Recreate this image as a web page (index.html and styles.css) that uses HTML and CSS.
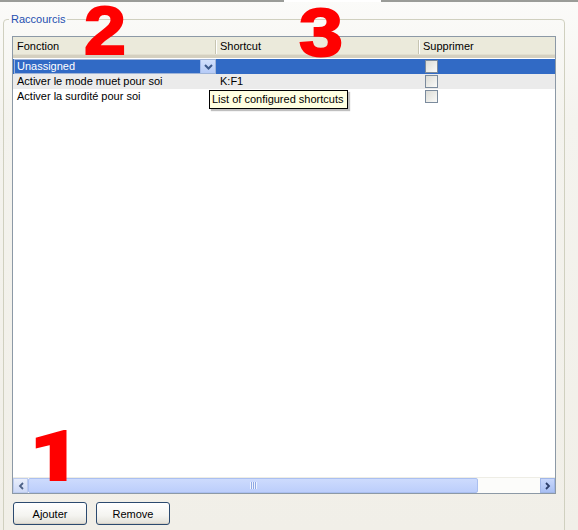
FILE: index.html
```html
<!DOCTYPE html>
<html lang="fr">
<head>
<meta charset="utf-8">
<title>Raccourcis</title>
<link rel="stylesheet" href="styles.css">
</head>
<body>
<div class="tabline"><div class="tl-left"></div><div class="tl-gap"></div><div class="tl-right"></div></div>
<div class="page">
  <fieldset class="group">
    <legend class="group-title">Raccourcis</legend>
    <div class="group-body">
      <div class="list">
        <div class="list-header">
          <div class="hcell">Fonction</div>
          <div class="hcell">Shortcut</div>
          <div class="hcell last">Supprimer</div>
        </div>
        <div class="row selected">
          <div class="cell combo-cell">
            <div class="combo">
              <span class="combo-text">Unassigned</span>
              <span class="combo-btn">
                <svg width="9" height="6" viewBox="0 0 9 6"><path d="M1 1 L4.5 4.5 L8 1" fill="none" stroke="#3d5a8c" stroke-width="2"/></svg>
              </span>
            </div>
          </div>
          <div class="cell"></div>
          <div class="cell check-cell"><span class="check"></span></div>
        </div>
        <div class="row alt">
          <div class="cell">Activer le mode muet pour soi</div>
          <div class="cell">K:F1</div>
          <div class="cell check-cell"><span class="check"></span></div>
        </div>
        <div class="row">
          <div class="cell">Activer la surdité pour soi</div>
          <div class="cell"></div>
          <div class="cell check-cell"><span class="check"></span></div>
        </div>
        <div class="list-fill"></div>
        <div class="hscroll">
          <div class="sb-btn sb-left">
            <svg width="6" height="8" viewBox="0 0 6 8"><path d="M5 1 L2 4 L5 7" fill="none" stroke="#4d6185" stroke-width="1.8"/></svg>
          </div>
          <div class="sb-thumb"><span class="grip"></span></div>
          <div class="sb-track"></div>
          <div class="sb-btn sb-right">
            <svg width="6" height="8" viewBox="0 0 6 8"><path d="M1 1 L4 4 L1 7" fill="none" stroke="#2d3f6b" stroke-width="1.8"/></svg>
          </div>
        </div>
      </div>
      <div class="buttons">
        <button class="btn">Ajouter</button>
        <button class="btn">Remove</button>
      </div>
    </div>
  </fieldset>
</div>
<div class="tooltip">List of configured shortcuts</div>
<svg class="mark mark-2" width="52" height="60" viewBox="0 0 52 60"><text class="mark-text" x="4" y="53.5" textLength="42" lengthAdjust="spacingAndGlyphs">2</text></svg>
<svg class="mark mark-3" width="52" height="60" viewBox="0 0 52 60"><text class="mark-text" x="4" y="56" textLength="44" lengthAdjust="spacingAndGlyphs">3</text></svg>
<svg class="mark mark-1" width="50" height="62" viewBox="0 0 50 62"><text class="mark-text one" x="0" y="55" textLength="50" lengthAdjust="spacingAndGlyphs">1</text></svg>
</body>
</html>
```
FILE: styles.css
```css
html, body {
  margin: 0;
  padding: 0;
}
body {
  width: 578px;
  height: 530px;
  overflow: hidden;
  position: relative;
  font-family: "Liberation Sans", Arial, sans-serif;
  font-size: 11px;
  color: #000;
  background: linear-gradient(#fbfbf9 0px, #f4f3ee 120px, #f1efe8 530px);
}
.tabline {
  display: flex;
  height: 2px;
}
.tl-left {
  flex: 0 0 284px;
  background: #9a9c98;
}
.tl-gap {
  flex: 0 0 97px;
  background: #ffffff;
}
.tl-right {
  flex: 1;
  background: #9a9c98;
}
.page {
  padding: 11px 13px 0 3px;
}
.group {
  margin: 0;
  padding: 0;
  border: 1px solid #d0d0bf;
  border-radius: 4px;
  min-width: 0;
}
.group-title {
  margin-left: 5px;
  padding: 0 2px;
  color: #1f4fb0;
  line-height: 13px;
  font-size: 11px;
}
.group-body {
  padding: 10px 8px 40px 8px;
}
.list {
  height: 458px;
  box-sizing: border-box;
  border: 1px solid #8c99a6;
  background: #fff;
  display: flex;
  flex-direction: column;
}
.list-header {
  display: grid;
  grid-template-columns: 203px 203px 1fr;
  height: 21px;
  box-sizing: border-box;
  background: #ebeadb;
  border-bottom: 3px solid #d4d0c0;
  box-shadow: inset 0 -1px 0 #e2dfd0;
}
.hcell {
  position: relative;
  padding-left: 4px;
  line-height: 19px;
}
.hcell::after {
  content: "";
  position: absolute;
  right: 0;
  top: 3px;
  bottom: 2px;
  width: 1px;
  background: #c7c5b2;
  box-shadow: 1px 0 0 #fff;
}
.hcell.last::after {
  display: none;
}
.row {
  display: grid;
  grid-template-columns: 203px 203px 1fr;
  height: 15px;
}
.list-header + .row {
  margin-top: 1px;
}
.row.alt {
  background: #ebebeb;
}
.row.selected {
  background: #316ac5;
}
.cell {
  padding-left: 4px;
  line-height: 15px;
  white-space: nowrap;
}
.combo-cell {
  padding-left: 1px;
}
.combo {
  display: flex;
  height: 15px;
  box-sizing: border-box;
  border: 1px solid #9fb4d8;
  background: #316ac5;
}
.combo-text {
  flex: 1;
  color: #fff;
  padding-left: 2px;
  line-height: 13px;
}
.combo-btn {
  flex: 0 0 14px;
  background: linear-gradient(#d2e0fc, #b6cbf7);
  border-left: 1px solid #a5bbe8;
  display: flex;
  align-items: center;
  justify-content: center;
}
.check-cell {
  padding-left: 6px;
  display: flex;
  align-items: center;
}
.check {
  width: 13px;
  height: 13px;
  box-sizing: border-box;
  border: 1px solid #7b8b9d;
  background: linear-gradient(135deg, #dcdcd6, #fafaf8);
}
.list-fill {
  flex: 1;
}
.hscroll {
  display: flex;
  height: 15px;
  background: #f9f9f6;
  border-top: 1px solid #eeede5;
}
.sb-btn {
  flex: 0 0 15px;
  display: flex;
  align-items: center;
  justify-content: center;
  box-sizing: border-box;
}
.sb-left {
  background: linear-gradient(#e9eefb, #cdd9f6);
  border: 1px solid #bccbee;
}
.sb-right {
  background: linear-gradient(#c8d7fb, #a9c0f4);
  border: 1px solid #a0b6e8;
}
.sb-thumb {
  flex: 0 0 450px;
  box-sizing: border-box;
  border: 1px solid #aabff0;
  border-radius: 2px;
  background: linear-gradient(#cddbfd, #bccefb);
  display: flex;
  align-items: center;
  justify-content: center;
}
.grip {
  width: 7px;
  height: 7px;
  background: repeating-linear-gradient(90deg, #eef3fe 0 1px, #8fa9e4 1px 2px);
}
.sb-track {
  flex: 1;
  background: #fcfcfa;
}
.buttons {
  display: flex;
  gap: 9px;
  margin-top: 8px;
  padding-left: 1px;
}
.btn {
  width: 74px;
  height: 23px;
  margin: 0;
  padding: 0;
  font-family: "Liberation Sans", Arial, sans-serif;
  font-size: 11px;
  color: #000;
  border: 1px solid #2b4a6f;
  border-radius: 3px;
  background: linear-gradient(#ffffff, #f4f4f0 60%, #e2e0d8);
  box-shadow: inset 0 -1px 0 #d6d0c5;
}
.tooltip {
  position: absolute;
  left: 209px;
  top: 90px;
  width: 139px;
  height: 19px;
  box-sizing: border-box;
  border: 1px solid #000;
  background: #ffffe1;
  padding-left: 2px;
  line-height: 17px;
  white-space: nowrap;
  box-shadow: 2px 2px 1px rgba(0, 0, 0, 0.25);
}
.mark {
  position: absolute;
  overflow: visible;
}
.mark-text {
  font-family: "Liberation Sans", Arial, sans-serif;
  font-weight: bold;
  font-size: 68px;
  fill: #f00;
  stroke: #f00;
  stroke-width: 2px;
}
.mark-text.one {
  font-family: Roboto, "Liberation Sans", sans-serif;
  font-weight: 900;
}
.mark-2 {
  left: 80px;
  top: 0;
}
.mark-3 {
  left: 295px;
  top: 0;
}
.mark-1 {
  left: 30px;
  top: 425px;
}
```
